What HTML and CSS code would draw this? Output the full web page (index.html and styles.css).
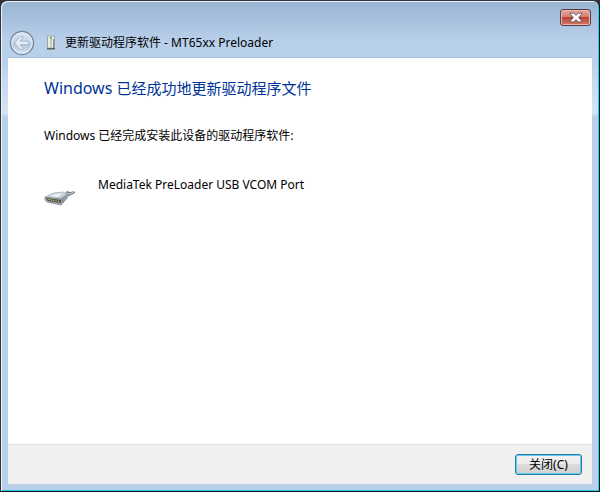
FILE: index.html
```html
<!DOCTYPE html>
<html lang="zh-CN">
<head>
  <meta charset="UTF-8">
  <title>更新驱动程序软件 - MT65xx Preloader</title>
  <link rel="stylesheet" href="styles.css">
</head>
<body>
  <div class="window">
    <!-- Caption buttons -->
    <header class="caption">
      <button type="button" class="close-button" aria-label="关闭窗口">
        <svg width="14" height="11" viewBox="0 0 12 10">
          <path d="M1 1h3l2 2 2-2h3v1L8.500 5 11 8v1H8L6 7 4 9H1V8l2.500-3L1 2z" fill="#fff" stroke="#5c4a58" stroke-width="0.800"/>
        </svg>
      </button>
    </header>

    <!-- Back button and title -->
    <div class="title-bar">
      <button type="button" class="back-button" aria-label="返回" disabled>
        <svg width="26" height="26" viewBox="0 0 26 26">
          <defs>
            <linearGradient id="orb" x1="0" y1="0" x2="0" y2="1">
              <stop offset="0" stop-color="#dce7f3"/>
              <stop offset="0.5" stop-color="#c3d3e6"/>
              <stop offset="0.55" stop-color="#b0c4dc"/>
              <stop offset="1" stop-color="#dbe8f5"/>
            </linearGradient>
          </defs>
          <circle cx="13" cy="13" r="11.500" fill="url(#orb)" stroke="#75849a" stroke-width="1.300"/>
          <circle cx="13" cy="13" r="10.200" fill="none" stroke="#eaf2fa" stroke-width="1"/>
          <path d="M5.500 13l6-6.500h2.500v1.500l-3 3.200h8.500v3.600H11l3 3.200v1.500h-2.500z" fill="#e6edf5" stroke="#9aabc1" stroke-width="0.800"/>
        </svg>
      </button>
      <svg class="device-icon" width="10" height="16" viewBox="0 0 10 16">
        <path d="M1.500 1h7v12h-7z" fill="#e9ebe7" stroke="#a0a6a6" stroke-width="1"/>
        <path d="M4 4h2v8H4z" fill="#c5cac6"/>
        <path d="M4 2h2v2H4z" fill="#5fc443"/>
        <path d="M7 4h1.500v9H7z" fill="#8d9392"/>
        <path d="M1 13h8v1.500H1z" fill="#5c6265"/>
      </svg>
      <span class="title">更新驱动程序软件 - MT65xx Preloader</span>
    </div>

    <main class="content">
      <h1>Windows <span class="heading-cjk">已经成功地更新驱动程序文件</span></h1>
      <p>Windows 已经完成安装此设备的驱动程序软件:</p>
      <div class="device">
        <svg class="port-icon" width="32" height="20" viewBox="0 0 32 20">
          <path d="M20 5l3-3 3 1 5-1v2l-6 3-3 3z" fill="#76808a"/>
          <path d="M22 4l4 1 5-3" fill="none" stroke="#c4cdd5" stroke-width="1"/>
          <path d="M1 8l9-4 9-1 5 3-1 4-5 5-15-3z" fill="#c8d0d8" stroke="#959fa8" stroke-width="0.600"/>
          <path d="M5 7l7-2 7-1-5 4z" fill="#edf1f4"/>
          <path d="M17 9l6-4v4l-5 6z" fill="#8f9aa5"/>
          <path d="M1 8l17 2 1 3-2 3-14-3-2-2z" fill="#a9b0b5" stroke="#727a80" stroke-width="0.700"/>
          <path d="M2 9l15 2v3L4 12z" fill="#45473b"/>
          <path d="M4 10.500l12 2" stroke="#c7c58c" stroke-width="1.200" stroke-dasharray="1.500 1"/>
        </svg>
        <span>MediaTek PreLoader USB VCOM Port</span>
      </div>
    </main>

    <footer class="actions">
      <button type="button" class="action-button">关闭(C)</button>
    </footer>
  </div>
</body>
</html>
```
FILE: styles.css
```css
* {
  box-sizing: border-box;
}
body {
  margin: 0;
  background: #35323a;
  font-family: "Noto Sans", "Noto Sans CJK SC", sans-serif;
  font-size: 12px;
  color: #000;
}
button {
  font-family: inherit;
  padding: 0;
}
.window {
  display: flex;
  flex-direction: column;
  min-height: 100vh;
  padding: 0 7px 7px;
  border: 1px solid #35323a;
  border-right-color: #06171f;
  border-bottom-color: #06171f;
  border-radius: 7px 7px 0 0;
  background: linear-gradient(#98b4d2, #b9d0eb 40px, #b9d0eb 56px, #d4e4f5 112px, #b9d0eb 116px);
  box-shadow: inset 1px 1px #e8f3fc, inset -1px -1px #27cbea;
}

/* Title area */
.caption {
  display: flex;
  justify-content: flex-end;
  height: 28px;
  padding-top: 8px;
}
.close-button {
  display: flex;
  align-items: center;
  justify-content: center;
  width: 31px;
  height: 17px;
  margin-right: 1px;
  border: 1px solid #573a48;
  border-radius: 3px;
  background: linear-gradient(#e6a69b, #d4816f 45%, #b84332 50%, #d37a67);
  box-shadow: inset 0 0 0 1px #ecb8ad;
}
.title-bar {
  display: flex;
  align-items: center;
  height: 28px;
  padding-left: 1px;
}
.back-button {
  width: 26px;
  height: 26px;
  border: none;
  background: none;
}
.back-button svg {
  display: block;
}
.device-icon {
  margin: 0 9px 0 11px;
}
.title {
  line-height: 20px;
}

/* Page body */
.content {
  flex: 1;
  padding: 18px 36px;
  border-top: 1px solid #a5bddb;
  background: #fff;
}
h1 {
  margin: 0;
  font-size: 16px;
  font-weight: normal;
  line-height: 24px;
  color: #003399;
}
.heading-cjk {
  font-size: 15px;
}
p {
  margin: 26px 0 0;
  line-height: 20px;
}
.device {
  display: flex;
  align-items: flex-start;
  gap: 22px;
  margin-top: 29px;
  line-height: 20px;
}
.port-icon {
  margin-top: 14px;
}

/* Button row */
.actions {
  display: flex;
  justify-content: flex-end;
  padding: 9px 10px;
  border-top: 1px solid #dfdfdf;
  background: #f0f0f0;
}
.action-button {
  width: 67px;
  height: 21px;
  border: 1px solid #2c7ba3;
  border-radius: 3px;
  background: linear-gradient(#f2f2f2, #ebebeb 50%, #dcdcdc 50%, #d0d0d0);
  box-shadow: inset 0 0 0 1px #5bcdf0;
  font-size: 12px;
  line-height: 17px;
  color: #000;
}
```
